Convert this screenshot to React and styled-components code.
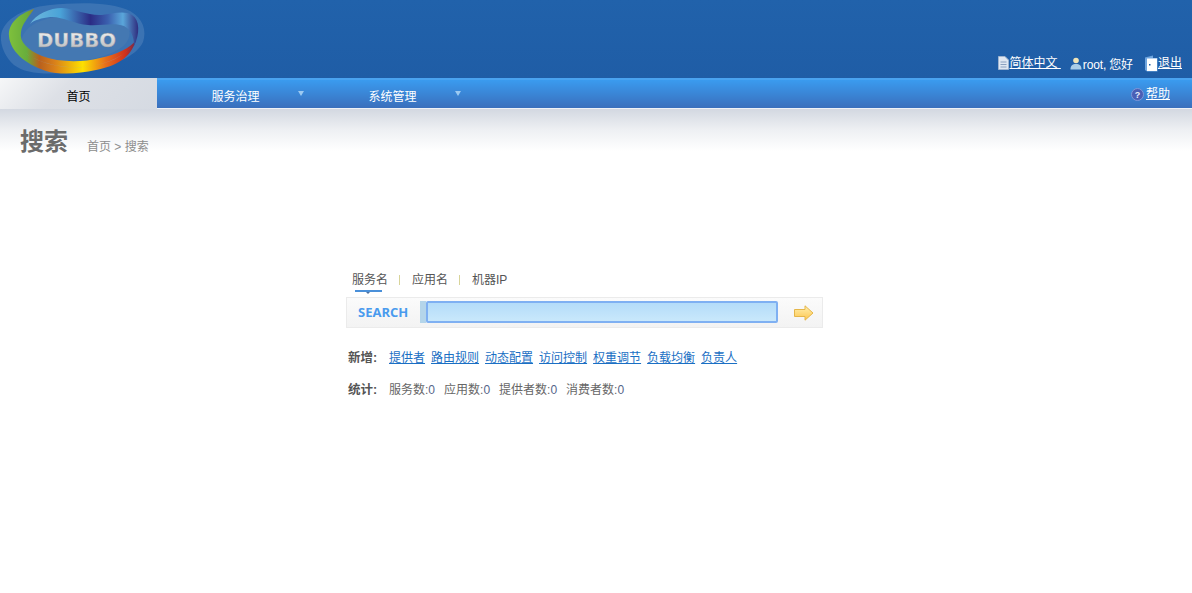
import React from 'react';
import styled, { createGlobalStyle } from 'styled-components';

const Global = createGlobalStyle`
  html, body { margin: 0; padding: 0; background: #fff; }
  body { font-family: "Liberation Sans", "Noto Sans CJK SC", sans-serif; font-size: 12px; color: #555; }
  a { color: inherit; }
`;

const Page = styled.div`width: 1192px; height: 593px; overflow: hidden; background: #fff;`;

const Header = styled.header`
  height: 78px;
  background: linear-gradient(#2162ab, #1f5da6);
  display: flex;
  justify-content: space-between;
  align-items: flex-end;
  padding-right: 10px;
`;
const Logo = styled.svg`width: 148px; height: 78px; display: block; align-self: flex-start;`;
const UserBar = styled.div`
  display: flex; align-items: center; height: 20px; margin-bottom: 5px; color: #fff; font-size: 12px;
`;
const UserItem = styled.span`display: flex; align-items: center; margin-left: ${p => p.$gap}px; white-space: nowrap;`;
const WhiteLink = styled.a`color: #fff; text-decoration: underline; line-height: 16px; padding-right: ${p => p.$pad || 0}px;`;
const Greeting = styled.span`letter-spacing: -0.15px; padding-left: 1px;`;

const Nav = styled.nav`
  height: 31px;
  box-sizing: border-box;
  border-top: 2px solid #4aa3f0;
  border-bottom: 1px solid #eef1f6;
  background: linear-gradient(#3a9bef, #3a6fbc);
  display: flex;
  align-items: stretch;
`;
const HomeTab = styled.div`
  width: 157px; margin-top: -2px; margin-bottom: -1px;
  background: linear-gradient(135deg, #f6f7f8 0%, #dde0e6 40%, #d5dae2 100%);
  color: #000; font-size: 12px;
  display: flex; align-items: center; justify-content: center;
  padding-top: 4px; box-sizing: border-box;
`;
const MenuItem = styled.div`
  width: 157px; position: relative; color: #fff; font-size: 12px;
  display: flex; align-items: center; justify-content: center; padding: 2px 0 0 0; box-sizing: border-box;
`;
const Caret = styled.i`
  position: absolute; top: 11px; right: 10px;
  width: 0; height: 0;
  border-left: 3.5px solid transparent; border-right: 3.5px solid transparent; border-top: 5px solid #9ccaf2;
`;
const Help = styled.div`
  margin-left: auto; margin-right: 22px; display: flex; align-items: center; gap: 2px; color: #fff; font-size: 12px;
`;

const TitleBand = styled.div`
  height: 42px;
  background: linear-gradient(#d3d8e1 0%, #eef0f3 50%, #ffffff 100%);
  display: flex; align-items: flex-start; padding: 18px 0 0 20px; box-sizing: border-box;
`;
const Title = styled.h1`
  margin: 0; font-size: 24px; line-height: 30px; font-weight: bold; color: #6b6b6b; width: 67px;
`;
const Crumb = styled.div`font-size: 12px; color: #8d8d8d; line-height: 18px; margin-top: 11px;`;

const Main = styled.main`
  width: 477px; margin: 120px 0 0 346px;
`;
const Tabs = styled.div`display: flex; align-items: flex-start; height: 26px; color: #555;`;
const Tab = styled.div`
  position: relative; font-size: 12px; line-height: 18px; width: ${p => p.$w}px; padding-left: ${p => p.$pad}px; box-sizing: border-box; white-space: nowrap;
  ${p => p.$active && `
    &::after { content: ""; position: absolute; left: 9px; top: 19px; width: 27px; height: 2px; background: #4a90d9; }
    &::before { content: ""; position: absolute; left: 20px; top: 21px; border-left: 2px solid transparent; border-right: 2px solid transparent; border-top: 2px solid #4a6fa0; }
  `}
`;
const Sep = styled.span`
  width: 1px; height: 10px; background: #d8d49a; margin-top: 4px; flex: none;
`;
const SearchBar = styled.div`
  height: 31px; box-sizing: border-box; border: 1px solid #ebebeb; padding-bottom: 2px;
  background: linear-gradient(#fbfbfb, #f3f3f3);
  display: flex; align-items: center;
`;
const SearchLabel = styled.span`
  width: 73px; padding-left: 11px; box-sizing: border-box; color: #4a9bee; font-weight: bold; font-size: 13px;
  font-family: "Open Sans", "Liberation Sans", sans-serif;
`;
const InputWrap = styled.div`
  display: flex; align-items: stretch; height: 22px;
`;
const InputLeft = styled.div`width: 6px; background: #b4d5ea;`;
const SearchInput = styled.input`
  width: 352px; height: 22px; box-sizing: border-box; padding: 0; outline: 0;
  border: 2px solid #7fb0f2; border-radius: 2px;
  background: linear-gradient(#b4dcf9, #c9e8fb);
`;
const Go = styled.svg`width: 20px; height: 16px; margin-left: 16px; display: block; position: relative; top: 1px;`;

const InfoRow = styled.div`
  display: flex; align-items: center; height: 18px; padding-left: 2px; margin-top: ${p => p.$mt}px; white-space: nowrap;
`;
const InfoLabel = styled.b`width: 41px; color: #555; font-size: 12.5px;`;
const BlueLink = styled.a`color: #1a6fc4; text-decoration: underline; font-size: 12px; margin-right: 6px;`;
const Stat = styled.span`font-size: 12px; color: #666; margin-right: 9px;`;
const Num = styled.span`color: #55658a;`;

const DocIcon = () => (
  <svg width="11" height="14" viewBox="0 0 11 14"><path d="M.5.5h6.500l3.500 3.500v9.500H.5z" fill="#dfe7f2" stroke="#9fb4cf"/><path d="M2.500 6h6M2.500 8.500h6M2.500 11h6" stroke="#8aa0bf"/></svg>
);
const UserIcon = () => (
  <svg width="12" height="13" viewBox="0 0 12 13"><circle cx="6" cy="3.500" r="2.800" fill="#f0e5b8"/><path d="M.5 12.500c0-4 2-5.500 5.500-5.500s5.500 1.500 5.500 5.500z" fill="#a9cde8"/></svg>
);
const DoorIcon = () => (
  <svg width="13" height="17" viewBox="0 0 13 17"><path d="M0 2.500 8 .5V3h4.500v13.500H2L0 15z" fill="#6fa5de"/><rect x="2" y="3.500" width="10" height="12.500" fill="#fff"/><rect x="4" y="9" width="1.500" height="1.500" fill="#1f5da6"/></svg>
);
const HelpIcon = () => (
  <svg width="13" height="13" viewBox="0 0 13 13"><circle cx="6.500" cy="6.500" r="6" fill="#4a5fb5" stroke="#7f97d8"/><text x="6.500" y="10" textAnchor="middle" fontSize="9" fontWeight="bold" fill="#e8eefc" fontFamily="Liberation Sans">?</text></svg>
);

const DubboLogo = () => (
  <Logo viewBox="0 0 148 78">
    <defs>
      <linearGradient id="ring" x1="9" y1="0" x2="136" y2="0" gradientUnits="userSpaceOnUse">
        <stop offset="0" stopColor="#7ec03c"/><stop offset=".14" stopColor="#68ad3c"/><stop offset=".24" stopColor="#b8601e"/>
        <stop offset=".36" stopColor="#d9801a"/><stop offset=".58" stopColor="#fde000"/><stop offset=".76" stopColor="#e8701a"/><stop offset=".92" stopColor="#cf2f1c"/><stop offset="1" stopColor="#6a2a50"/>
      </linearGradient>
      <linearGradient id="top" x1="30" y1="0" x2="138" y2="0" gradientUnits="userSpaceOnUse">
        <stop offset="0" stopColor="#6fb8dc"/><stop offset=".28" stopColor="#4aa3d8"/><stop offset=".56" stopColor="#2b2c85"/><stop offset=".72" stopColor="#3a5fae"/><stop offset=".86" stopColor="#5aa6da"/><stop offset="1" stopColor="#2f2f80"/>
      </linearGradient>
      <linearGradient id="txt" x1="0" y1="0" x2="0" y2="1">
        <stop offset="0" stopColor="#f6f6f6"/><stop offset="1" stopColor="#b4b7bc"/>
      </linearGradient>
    </defs>
    <path d="M1 36C2 22 20 8 50 5c30-3 62-3 80 6 13 7 17 20 13 31-7 15-30 24-62 29-30 4-54 4-67-6C6 58 0 46 1 36z" fill="#5585bd" opacity=".5"/>
    <path d="M22 38c3-10 14-18 34-21 22-3 50-4 66 4 10 6 10 18 0 26-12 9-36 15-58 15-24-1-46-10-42-24z" fill="#4478b2"/>
    <path d="M34 9C18 14 8 24 9 36c1 14 15 28 37 35 14 4 32 3 50-1 20-4 35-12 40-30-6 8-18 14-36 18-20 5-42 4-58-2C28 50 19 42 21 32c1-8 7-14 13-23z" fill="url(#ring)"/>
    <path d="M30 24C36 14 50 8 62 8c14 1 26 8 40 7 10-1 22-5 30 0 8 5 8 19 2 31 0-8-2-16-10-20-10-4-22 0-36-1C74 24 62 16 50 17c-8 1-16 3-20 7z" fill="url(#top)"/>
    <path d="M24 52c14 12 50 20 76 12 14-4 26-10 32-18-10 12-24 17-40 20-22 4-50 0-68-14z" fill="#8fb4dc" opacity=".35"/>
    <text x="37" y="47" fontFamily="DejaVu Sans" fontWeight="bold" fontSize="19" stroke="#8d9096" strokeWidth=".3" fill="url(#txt)" textLength="79" lengthAdjust="spacingAndGlyphs">DUBBO</text>
  </Logo>
);

export default function App() {
  return (
    <Page>
      <Global />
      <Header>
        <DubboLogo />
        <UserBar>
          <UserItem $gap={0}><DocIcon /><WhiteLink $pad={2}>简体中文&nbsp;</WhiteLink></UserItem>
          <UserItem $gap={7}><UserIcon /><Greeting>root, 您好</Greeting></UserItem>
          <UserItem $gap={12}><DoorIcon /><WhiteLink>退出</WhiteLink></UserItem>
        </UserBar>
      </Header>
      <Nav>
        <HomeTab>首页</HomeTab>
        <MenuItem>服务治理<Caret /></MenuItem>
        <MenuItem>系统管理<Caret /></MenuItem>
        <Help><HelpIcon /><WhiteLink>帮助</WhiteLink></Help>
      </Nav>
      <TitleBand>
        <Title>搜索</Title>
        <Crumb>首页 &gt; 搜索</Crumb>
      </TitleBand>
      <Main>
        <Tabs>
          <Tab $active $w={53} $pad={6}>服务名</Tab>
          <Sep />
          <Tab $w={59} $pad={12}>应用名</Tab>
          <Sep />
          <Tab $w={60} $pad={12}>机器IP</Tab>
        </Tabs>
        <SearchBar>
          <SearchLabel>SEARCH</SearchLabel>
          <InputWrap>
            <InputLeft />
            <SearchInput />
          </InputWrap>
          <Go viewBox="0 0 20 16">
            <defs><linearGradient id="arrow" x1="0" y1="0" x2="0" y2="1"><stop offset="0" stopColor="#fff0b0"/><stop offset="1" stopColor="#fdc64e"/></linearGradient></defs>
            <path d="M.5 4.500h10.500V.8L19 8l-8 7.200v-3.700H.5z" fill="url(#arrow)" stroke="#e5b64a"/>
          </Go>
        </SearchBar>
        <InfoRow $mt={19}>
          <InfoLabel>新增:</InfoLabel>
          {['提供者', '路由规则', '动态配置', '访问控制', '权重调节', '负载均衡', '负责人'].map(t => <BlueLink key={t}>{t}</BlueLink>)}
        </InfoRow>
        <InfoRow $mt={14}>
          <InfoLabel>统计:</InfoLabel>
          <Stat>服务数:<Num>0</Num></Stat>
          <Stat>应用数:<Num>0</Num></Stat>
          <Stat>提供者数:<Num>0</Num></Stat>
          <Stat>消费者数:<Num>0</Num></Stat>
        </InfoRow>
      </Main>
    </Page>
  );
}
